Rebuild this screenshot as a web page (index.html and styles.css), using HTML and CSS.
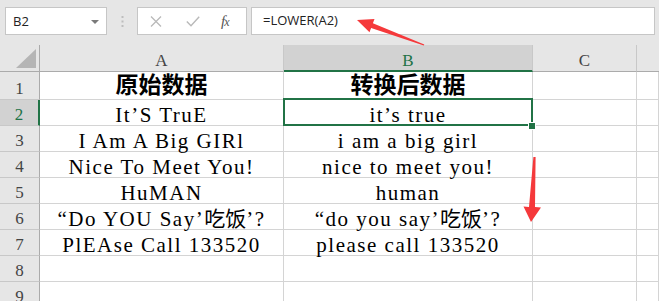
FILE: index.html
```html
<!DOCTYPE html>
<html lang="zh-CN">
<head>
  <meta charset="UTF-8" />
  <title>LOWER</title>
  <link rel="stylesheet" href="styles.css">
</head>
<body>
  <div class="app">
    <div class="toolbar">
      <div class="namebox">
        <span>B2</span>
        <svg class="caret" width="8" height="4" viewBox="0 0 8 4"><polygon points="0,0 8,0 4,4" fill="#7a7a7a"/></svg>
      </div>
      <div class="grip">
        <svg width="3" height="11" viewBox="0 0 3 11"><rect x="0.5" y="0" width="2" height="2" fill="#bdbdbd"/><rect x="0.5" y="4.5" width="2" height="2" fill="#bdbdbd"/><rect x="0.5" y="9" width="2" height="2" fill="#bdbdbd"/></svg>
      </div>
      <div class="fxbtns">
        <svg class="btn-x" width="12" height="11" viewBox="0 0 12 11"><path d="M1 0.5 L11 10.5 M11 0.5 L1 10.5" stroke="#b9b9b9" stroke-width="1.3" fill="none"/></svg>
        <svg class="btn-ok" width="14" height="11" viewBox="0 0 14 11"><path d="M0.8 5.5 L5 9.8 L13.2 0.8" stroke="#b9b9b9" stroke-width="1.4" fill="none"/></svg>
        <span class="btn-fx">f<span class="fx-x">x</span></span>
      </div>
      <div class="formula">=LOWER(A2)</div>
    </div>

    <div class="sheet">
      <div class="cell corner">
        <svg width="20" height="19" viewBox="0 0 20 19"><polygon points="20,0 20,19 0,19" fill="#b5b5b5"/></svg>
      </div>
      <div class="cell colhead">A</div>
      <div class="cell colhead active">B</div>
      <div class="cell colhead">C</div>
      <div class="cell colhead last"></div>

      <div class="cell rowhead">1</div>
      <div class="cell title">原始数据</div>
      <div class="cell title">转换后数据</div>
      <div class="cell"></div>
      <div class="cell"></div>

      <div class="cell rowhead active">2</div>
      <div class="cell">It’S TruE</div>
      <div class="cell">it’s true</div>
      <div class="cell"></div>
      <div class="cell"></div>

      <div class="cell rowhead">3</div>
      <div class="cell">I Am A Big GIRl</div>
      <div class="cell">i am a big girl</div>
      <div class="cell"></div>
      <div class="cell"></div>

      <div class="cell rowhead">4</div>
      <div class="cell">Nice To Meet You!</div>
      <div class="cell">nice to meet you!</div>
      <div class="cell"></div>
      <div class="cell"></div>

      <div class="cell rowhead">5</div>
      <div class="cell">HuMAN</div>
      <div class="cell">human</div>
      <div class="cell"></div>
      <div class="cell"></div>

      <div class="cell rowhead">6</div>
      <div class="cell">“Do YOU Say’<span class="cjk">吃饭</span>’?</div>
      <div class="cell">“do you say’<span class="cjk">吃饭</span>’?</div>
      <div class="cell"></div>
      <div class="cell"></div>

      <div class="cell rowhead">7</div>
      <div class="cell">PlEAse Call 133520</div>
      <div class="cell">please call 133520</div>
      <div class="cell"></div>
      <div class="cell"></div>

      <div class="cell rowhead">8</div>
      <div class="cell"></div>
      <div class="cell"></div>
      <div class="cell"></div>
      <div class="cell"></div>

      <div class="cell rowhead">9</div>
      <div class="cell"></div>
      <div class="cell"></div>
      <div class="cell"></div>
      <div class="cell"></div>

      <div class="selection"><div class="handle"></div></div>
    </div>

    <svg class="arrows" width="659" height="301" viewBox="0 0 659 301">
      <polygon points="357,20 374.5,19 372.9,23.3 424.3,44.6 423.8,45.4 371.1,27.9 369.5,32.2" fill="#f5393b"/>
      <polygon points="531,222 541,207.5 535,207 535.6,157 533.4,157 529,207 523.5,206.5" fill="#f5393b"/>
    </svg>
  </div>
</body>
</html>
```

FILE: styles.css
```css
body {
  margin: 0;
  background: #ffffff;
  font-family: "Liberation Serif", "Noto Sans CJK SC", serif;
  overflow: hidden;
}
.app {
  position: relative;
  width: 659px;
  height: 301px;
  overflow: hidden;
}

/* formula bar */
.toolbar {
  height: 45px;
  box-sizing: border-box;
  background: #e6e6e6;
  display: flex;
  align-items: flex-start;
  padding: 7px 4px 0 5px;
}
.namebox {
  width: 102px;
  height: 28px;
  box-sizing: border-box;
  border: 1px solid #c6c6c6;
  background: #fff;
  display: flex;
  align-items: center;
  justify-content: space-between;
  padding: 0 7px 0 7px;
  font: 13px "Open Sans", "Noto Sans", sans-serif;
  color: #222;
}
.caret {
  margin-top: 1px;
}
.grip {
  width: 30px;
  display: flex;
  justify-content: center;
  padding-top: 9px;
}
.fxbtns {
  width: 110px;
  height: 28px;
  box-sizing: border-box;
  border: 1px solid #c6c6c6;
  background: #fff;
  display: flex;
  align-items: center;
  padding-left: 12px;
}
.btn-ok {
  margin-left: 24px;
}
.btn-fx {
  margin-left: 21px;
  font: italic 15px "Liberation Serif", serif;
  color: #555;
  letter-spacing: -1px;
}
.fx-x {
  font-size: 12px;
}
.formula {
  flex: 1;
  height: 28px;
  margin-left: 4px;
  box-sizing: border-box;
  border: 1px solid #c6c6c6;
  background: #fff;
  padding-left: 11px;
  font: 13px "Open Sans", "Noto Sans", sans-serif;
  line-height: 25px;
  color: #222;
}

/* grid */
.sheet {
  position: relative;
  display: grid;
  grid-template-columns: 40px 244px 249px 104px 1fr;
  grid-template-rows: 27px 28px repeat(8, 26px);
}
.cell {
  box-sizing: border-box;
  border-right: 1px solid #d4d4d4;
  border-bottom: 1px solid #d4d4d4;
  display: flex;
  align-items: flex-end;
  justify-content: center;
  padding-bottom: 2px;
  font-size: 21px;
  letter-spacing: 1.5px;
  line-height: 16px;
  white-space: nowrap;
  color: #000;
}
.cjk {
  font-size: 21px;
  letter-spacing: 0;
}
.title {
  font-size: 23px;
  font-weight: bold;
  letter-spacing: 0;
  padding-bottom: 5px;
}
.corner {
  background: #e6e6e6;
  border-right: 1px solid #ababab;
  border-bottom: 1px solid #ababab;
  align-items: flex-end;
  justify-content: flex-end;
  padding: 0 3px 3px 0;
}
.colhead,
.rowhead {
  background: #e6e6e6;
  color: #444;
  font-size: 17px;
  letter-spacing: 0;
  padding-bottom: 2px;
}
.colhead {
  border-right-color: #c8c8c8;
  border-bottom-color: #ababab;
}
.colhead.last {
  border-right: none;
}
.rowhead {
  border-right-color: #ababab;
  border-bottom-color: #c8c8c8;
}
.colhead.active {
  background: #d2d2d2;
  color: #217346;
  border-bottom: 2px solid #217346;
  padding-bottom: 1px;
}
.rowhead.active {
  background: #d2d2d2;
  color: #217346;
  border-right: 2px solid #217346;
}

/* active cell B2 */
.selection {
  position: absolute;
  left: 283px;
  top: 53px;
  width: 250px;
  height: 28px;
  box-sizing: border-box;
  border: 2px solid #217346;
}
.handle {
  position: absolute;
  right: -4px;
  bottom: -5px;
  width: 6px;
  height: 6px;
  background: #217346;
  outline: 1px solid #fff;
}

.arrows {
  position: absolute;
  left: 0;
  top: 0;
  pointer-events: none;
}
```
